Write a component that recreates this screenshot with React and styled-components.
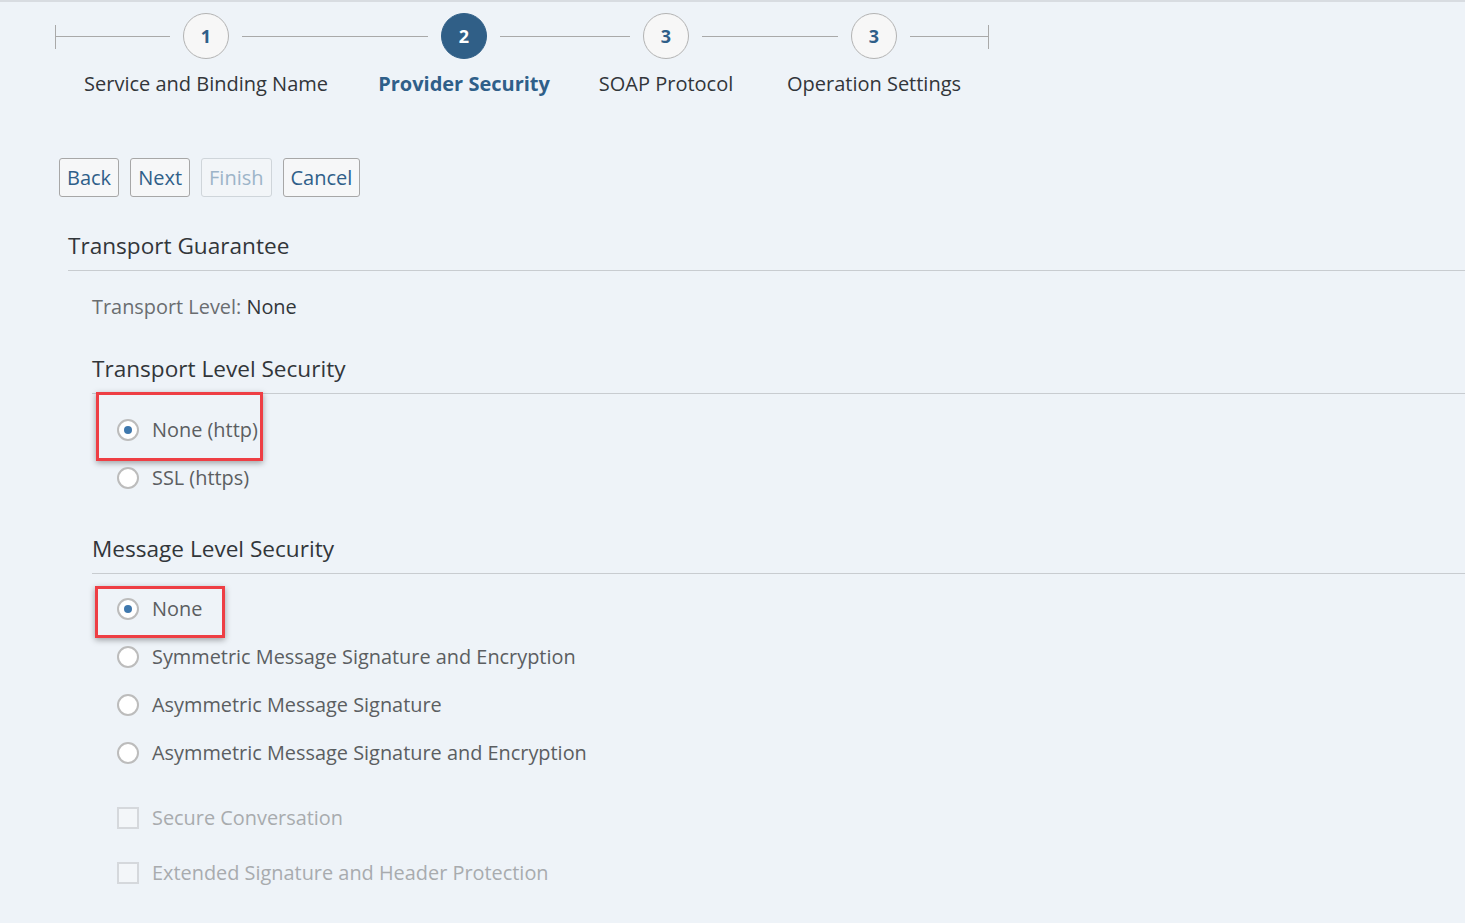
import React from "react";
import styled, { createGlobalStyle, css } from "styled-components";

const Global = createGlobalStyle`
  html, body { margin: 0; padding: 0; background: #eef3f8; }
  body { font-family: "Open Sans", "Noto Sans", "Liberation Sans", sans-serif; }
`;

const Page = styled.div`
  border-top: 2px solid #d8dce1;
  min-height: 921px;
  background: #eef3f8;
  color: #32363a;
`;

const Stepper = styled.div`
  display: flex;
  align-items: flex-start;
  padding: 11px 0 0 55px;
`;

const Tick = styled.div`
  width: 1px;
  height: 24px;
  margin-top: 12px;
  background: #a9a9a9;
`;

const Line = styled.div`
  height: 1px;
  width: ${(p) => p.$w}px;
  margin-top: 23px;
  background: #a9a9a9;
`;

const Step = styled.div`
  display: flex;
  flex-direction: column;
  align-items: center;
  width: 46px;
  margin: 0 13px;
`;

const Circle = styled.div`
  box-sizing: border-box;
  width: 46px;
  height: 46px;
  border-radius: 50%;
  display: flex;
  align-items: center;
  justify-content: center;
  font-weight: 700;
  font-size: 18px;
  border: 1px solid #b3b3b3;
  background: #f7f7f7;
  color: #2f5f89;
  ${(p) =>
    p.$active &&
    css`
      border-color: #305f87;
      background: #305f87;
      color: #ffffff;
    `}
`;

const StepLabel = styled.div`
  margin-top: 13px;
  white-space: nowrap;
  font-size: 20px;
  line-height: 24px;
  color: #32363a;
  ${(p) =>
    p.$active &&
    css`
      font-weight: 700;
      color: #2f5f89;
    `}
`;

const ButtonBar = styled.div`
  display: flex;
  gap: 11px;
  margin-top: 62px;
  padding-left: 59px;
`;

const Button = styled.button`
  height: 39px;
  padding: 0 7px;
  border: 1px solid #a7a7a7;
  border-radius: 3px;
  background: #f6f7f8;
  color: #2f5f89;
  font-family: inherit;
  font-size: 20px;
  cursor: pointer;
  ${(p) =>
    p.disabled &&
    css`
      border-color: #cfd5da;
      background: #f2f5f8;
      color: #9db4c8;
      cursor: default;
    `}
`;

const Section = styled.section`
  margin-left: 68px;
  margin-top: 34px;
`;

const Title = styled.h2`
  margin: 0;
  font-weight: 400;
  font-size: 22.6px;
  line-height: 30px;
  padding-bottom: 9px;
  border-bottom: 1px solid #c8ccd0;
  color: #32363a;
`;

const Body = styled.div`
  padding-left: 24px;
`;

const InfoRow = styled.div`
  margin-top: 24px;
  font-size: 19.9px;
  line-height: 24px;
  color: #6a6d70;
`;

const Value = styled.span`
  color: #32363a;
`;

const SubSection = styled.div`
  margin-top: ${(p) => p.$mt}px;
`;

const List = styled.div`
  display: flex;
  flex-direction: column;
  margin-top: ${(p) => p.$mt}px;
  padding-left: 25px;
`;

const Item = styled.div`
  position: relative;
  display: flex;
  align-items: center;
  height: ${(p) => p.$h || 48}px;
  gap: 13px;
`;

const RadioCircle = styled.span`
  box-sizing: border-box;
  width: 22px;
  height: 22px;
  border-radius: 50%;
  border: 2px solid #bcbcbc;
  background: #ffffff;
  display: flex;
  align-items: center;
  justify-content: center;
  &::after {
    content: "";
    width: 8px;
    height: 8px;
    border-radius: 50%;
    background: ${(p) => (p.$checked ? "#3f78ad" : "transparent")};
  }
`;

const CheckBox = styled.span`
  box-sizing: border-box;
  width: 22px;
  height: 22px;
  border: 2px solid #d5d8dc;
  background: #f3f6f9;
`;

const ItemLabel = styled.span`
  font-size: 19.9px;
  line-height: 24px;
  color: ${(p) => (p.$disabled ? "#a8abae" : "#5b5e61")};
  white-space: nowrap;
`;

const Highlight = styled.div`
  position: absolute;
  box-sizing: border-box;
  left: ${(p) => p.$l}px;
  top: ${(p) => p.$t}px;
  width: ${(p) => p.$w}px;
  height: ${(p) => p.$h}px;
  border: 3px solid #ee3e44;
  box-shadow: 0 2px 6px rgba(0, 0, 0, 0.35);
  pointer-events: none;
`;

function Radio({ label, checked, box }) {
  return (
    <Item>
      <RadioCircle $checked={checked} />
      <ItemLabel>{label}</ItemLabel>
      {box && <Highlight $l={box.l} $t={box.t} $w={box.w} $h={box.h} />}
    </Item>
  );
}

function Check({ label }) {
  return (
    <Item $h={55}>
      <CheckBox />
      <ItemLabel $disabled>{label}</ItemLabel>
    </Item>
  );
}

const steps = [
  { n: 1, label: "Service and Binding Name", line: 186 },
  { n: 2, label: "Provider Security", active: true, line: 130 },
  { n: 3, label: "SOAP Protocol", line: 136 },
  { n: 3, label: "Operation Settings", line: 78 },
];

export default function App() {
  return (
    <Page>
      <Global />
      <Stepper>
        <Tick />
        <Line $w={114} />
        {steps.map((s, i) => (
          <React.Fragment key={i}>
            <Step>
              <Circle $active={s.active}>{s.n}</Circle>
              <StepLabel $active={s.active}>{s.label}</StepLabel>
            </Step>
            <Line $w={s.line} />
          </React.Fragment>
        ))}
        <Tick />
      </Stepper>

      <ButtonBar>
        <Button>Back</Button>
        <Button>Next</Button>
        <Button disabled>Finish</Button>
        <Button>Cancel</Button>
      </ButtonBar>

      <Section>
        <Title>Transport Guarantee</Title>
        <Body>
          <InfoRow>
            Transport Level: <Value>None</Value>
          </InfoRow>

          <SubSection $mt={35}>
            <Title>Transport Level Security</Title>
            <List $mt={12}>
              <Radio
                label="None (http)"
                checked
                box={{ l: -21, t: -14, w: 167, h: 69 }}
              />
              <Radio label="SSL (https)" />
            </List>
          </SubSection>

          <SubSection $mt={32}>
            <Title>Message Level Security</Title>
            <List $mt={11}>
              <Radio label="None" checked box={{ l: -22, t: 1, w: 130, h: 52 }} />
              <Radio label="Symmetric Message Signature and Encryption" />
              <Radio label="Asymmetric Message Signature" />
              <Radio label="Asymmetric Message Signature and Encryption" />
            </List>
            <List $mt={13}>
              <Check label="Secure Conversation" />
              <Check label="Extended Signature and Header Protection" />
            </List>
          </SubSection>
        </Body>
      </Section>
    </Page>
  );
}
